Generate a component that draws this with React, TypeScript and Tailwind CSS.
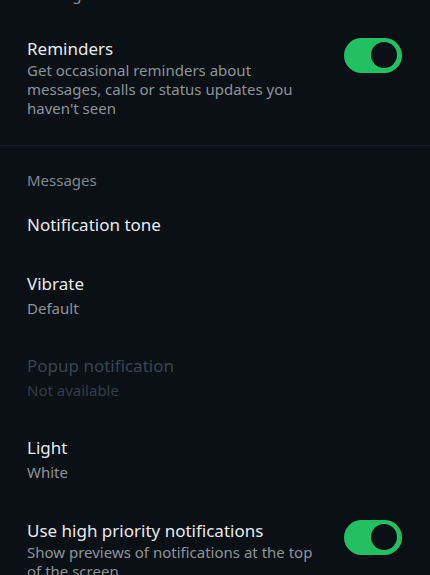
import React from 'react'

const font = { fontFamily: '"Noto Sans", "Open Sans", sans-serif' }

function Toggle() {
  return (
    <div className="relative mt-px h-[35px] w-[58px] shrink-0 rounded-full bg-[#21c063]">
      <div className="absolute right-[5px] top-[4px] h-[26px] w-[26px] rounded-full bg-[#0b1014]" />
    </div>
  )
}

function ToggleRow({ title, subtitle, className = '' }: { title: string; subtitle: string; className?: string }) {
  return (
    <div className={`flex items-start pl-[27px] pr-[28px] ${className}`}>
      <div className="w-[290px] shrink-0">
        <div className="text-[17px] leading-[24px] text-[#e7eaec]">{title}</div>
        <div className="text-[15px] leading-[19px] text-[#8b949a]">{subtitle}</div>
      </div>
      <div className="flex-1" />
      <Toggle />
    </div>
  )
}

function Item({ title, subtitle, disabled = false }: { title: string; subtitle?: string; disabled?: boolean }) {
  return (
    <div className={`px-[27px] ${subtitle ? 'py-[17px]' : 'py-[18px]'}`}>
      <div className={`text-[17px] leading-[24px] ${disabled ? 'text-[#3a454c]' : 'text-[#e7eaec]'}`}>{title}</div>
      {subtitle && (
        <div className={`text-[15px] leading-[24px] ${disabled ? 'text-[#333e44]' : 'text-[#8b949a]'}`}>{subtitle}</div>
      )}
    </div>
  )
}

export default function App() {
  return (
    <div className="h-[575px] w-[430px] overflow-hidden bg-[#0b1014]" style={font}>
      <div className="mt-[-15px] pl-[27px] text-[15px] leading-[19px] text-[#8b949a]">messages.</div>
      <ToggleRow
        className="pt-[33px] pb-[27px]"
        title="Reminders"
        subtitle="Get occasional reminders about messages, calls or status updates you haven't seen"
      />
      <div className="h-px bg-[#151c21]" />
      <div className="px-[27px] pt-[24px] pb-[5px] text-[15px] leading-[20px] text-[#7f888e]">Messages</div>
      <Item title="Notification tone" />
      <Item title="Vibrate" subtitle="Default" />
      <Item title="Popup notification" subtitle="Not available" disabled />
      <Item title="Light" subtitle="White" />
      <ToggleRow
        className="pt-[18px]"
        title="Use high priority notifications"
        subtitle="Show previews of notifications at the top of the screen"
      />
    </div>
  )
}
